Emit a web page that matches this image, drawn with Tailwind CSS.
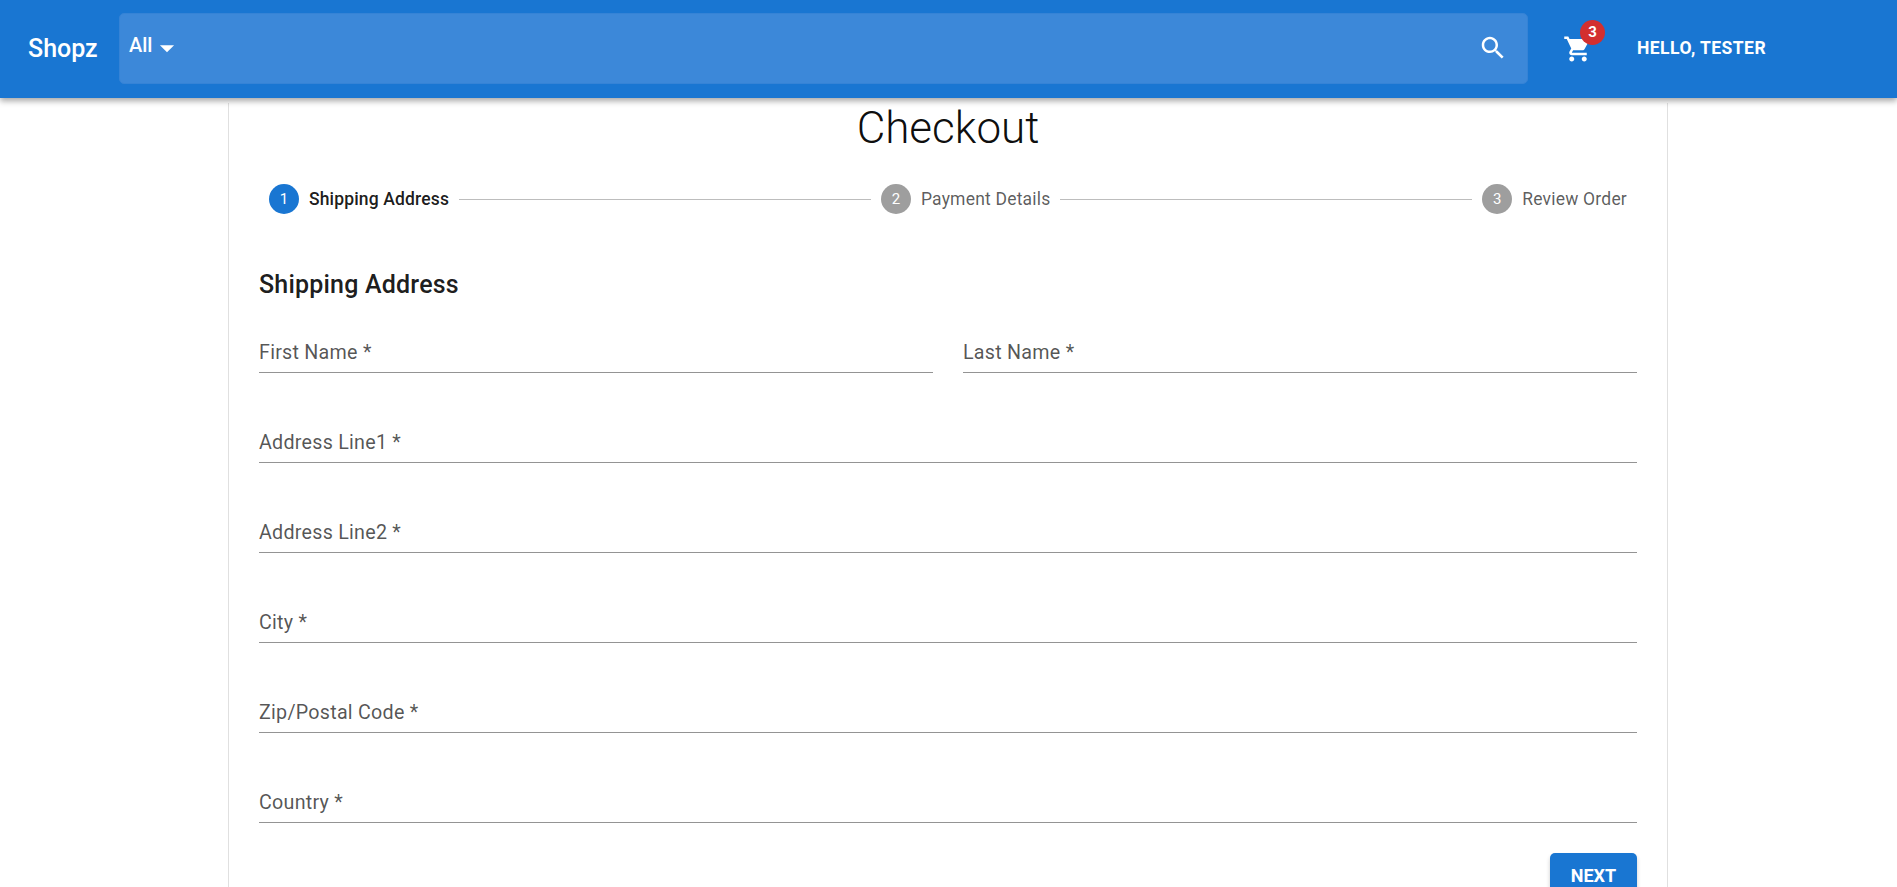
<!DOCTYPE html>
<html lang="en">

<head>
    <meta charset="UTF-8">
    <meta name="viewport" content="width=device-width, initial-scale=1.0">
    <title>Checkout</title>
    <script src="https://cdn.jsdelivr.net/npm/@tailwindcss/browser@4"></script>
</head>

<body class="h-[887px] overflow-hidden bg-white font-['Roboto',sans-serif]">
    <header class="relative z-10 w-full h-[98px] flex items-center bg-[#1976d2] text-white shadow-[0_3px_6px_rgba(0,0,0,0.35)]">
        <div class="w-[119px] pl-[28px] text-[25px] font-medium mt-[-1px]">Shopz</div>
        <div class="w-[1409px] h-[71px] flex justify-between bg-[#3c88d9] border border-[#3583d6] rounded-[5px] mt-[-1px]">
            <div class="flex items-start pl-[9px] pt-[19px] text-[20px] leading-[24px] font-medium">
                All
                <svg class="w-[34px] h-[34px] ml-[-2px] mt-[-2px]" viewBox="0 0 24 24" fill="#fff"><path d="M7 10l5 5 5-5z"/></svg>
            </div>
            <div class="flex items-center pr-[19px] mt-[-1px]">
                <svg class="w-[30px] h-[30px]" viewBox="0 0 24 24" fill="#fff"><path d="M15.5 14h-.79l-.28-.27C15.41 12.59 16 11.11 16 9.5 16 5.91 13.09 3 9.5 3S3 5.91 3 9.5 5.91 16 9.5 16c1.61 0 3.09-.59 4.23-1.57l.27.28v.79l5 4.99L20.49 19l-4.99-5zm-6 0C7.01 14 5 11.99 5 9.5S7.01 5 9.5 5 14 7.01 14 9.5 11.99 14 9.5 14z"/></svg>
            </div>
        </div>
        <div class="relative ml-[35px] w-[30px] h-[30px]">
            <svg class="w-[30px] h-[30px]" viewBox="0 0 24 24" fill="#fff"><path d="M7 18c-1.1 0-1.99.9-1.99 2S5.9 22 7 22s2-.9 2-2-.9-2-2-2zM1 2v2h2l3.6 7.59-1.35 2.45c-.16.28-.25.61-.25.96 0 1.1.9 2 2 2h12v-2H7.42c-.14 0-.25-.11-.25-.25l.03-.12.9-1.63h7.45c.75 0 1.41-.41 1.75-1.03l3.58-6.49c.08-.14.12-.31.12-.48 0-.55-.45-1-1-1H5.21l-.94-2H1zm16 16c-1.1 0-1.99.9-1.99 2s.89 2 1.99 2 2-.9 2-2-.9-2-2-2z"/></svg>
            <span class="absolute left-[17px] top-[-14px] w-[25px] h-[25px] flex items-center justify-center rounded-full bg-[#d32f2f] text-[15px] font-bold">3</span>
        </div>
        <div class="ml-[44px] mt-[-2px] text-[17.5px] font-bold tracking-[0.45px] whitespace-nowrap">HELLO, TESTER</div>
    </header>

    <main class="w-[1440px] h-[789px] ml-[228px] px-[30px] border-x border-[#e0e0e0]">
        <h1 class="mt-[5px] text-center text-[44px] leading-[50px] font-[350] text-[rgba(0,0,0,0.95)]">Checkout</h1>

        <div class="flex items-center mt-[31px] pl-[10px] pr-[10px] h-[30px]">
            <span class="w-[30px] h-[30px] flex items-center justify-center rounded-full bg-[#1976d2] text-white text-[15px]">1</span>
            <span class="ml-[10px] mt-[1px] text-[17.5px] tracking-[0.15px] font-medium text-[rgba(0,0,0,0.9)] whitespace-nowrap">Shipping Address</span>
            <div class="flex-1 mx-[10px] border-t border-[#bdbdbd]"></div>
            <span class="w-[30px] h-[30px] flex items-center justify-center rounded-full bg-[#9e9e9e] text-white text-[15px]">2</span>
            <span class="ml-[10px] mt-[1px] text-[17.5px] tracking-[0.2px] text-[rgba(0,0,0,0.65)] whitespace-nowrap">Payment Details</span>
            <div class="flex-1 mx-[10px] border-t border-[#bdbdbd]"></div>
            <span class="w-[30px] h-[30px] flex items-center justify-center rounded-full bg-[#9e9e9e] text-white text-[15px]">3</span>
            <span class="ml-[10px] mt-[1px] text-[17.5px] tracking-[0.2px] text-[rgba(0,0,0,0.65)] whitespace-nowrap">Review Order</span>
        </div>

        <h2 class="mt-[53px] text-[25px] leading-[36px] font-medium tracking-[0.2px] text-[rgba(0,0,0,0.9)]">Shipping Address</h2>

        <form class="grid grid-cols-2 gap-x-[30px] gap-y-[30px] mt-[10px]">
            <div class="h-[60px] flex items-end pb-[4px] border-b border-[#949494] text-[19.7px] tracking-[0.25px] text-[rgba(0,0,0,0.68)]">First Name *</div>
            <div class="h-[60px] flex items-end pb-[4px] border-b border-[#949494] text-[19.7px] tracking-[0.25px] text-[rgba(0,0,0,0.68)]">Last Name *</div>
            <div class="col-span-2 h-[60px] flex items-end pb-[4px] border-b border-[#949494] text-[19.7px] tracking-[0.25px] text-[rgba(0,0,0,0.68)]">Address Line1 *</div>
            <div class="col-span-2 h-[60px] flex items-end pb-[4px] border-b border-[#949494] text-[19.7px] tracking-[0.25px] text-[rgba(0,0,0,0.68)]">Address Line2 *</div>
            <div class="col-span-2 h-[60px] flex items-end pb-[4px] border-b border-[#949494] text-[19.7px] tracking-[0.25px] text-[rgba(0,0,0,0.68)]">City *</div>
            <div class="col-span-2 h-[60px] flex items-end pb-[4px] border-b border-[#949494] text-[19.7px] tracking-[0.25px] text-[rgba(0,0,0,0.68)]">Zip/Postal Code *</div>
            <div class="col-span-2 h-[60px] flex items-end pb-[4px] border-b border-[#949494] text-[19.7px] tracking-[0.25px] text-[rgba(0,0,0,0.68)]">Country *</div>
        </form>

        <div class="flex justify-end mt-[30px]">
            <button type="button" class="w-[87px] h-[46px] pb-[2px] rounded-[5px] bg-[#1976d2] text-white text-[18px] font-bold shadow-[0_3px_4px_rgba(0,0,0,0.2)]">NEXT</button>
        </div>
    </main>
</body>

</html>
